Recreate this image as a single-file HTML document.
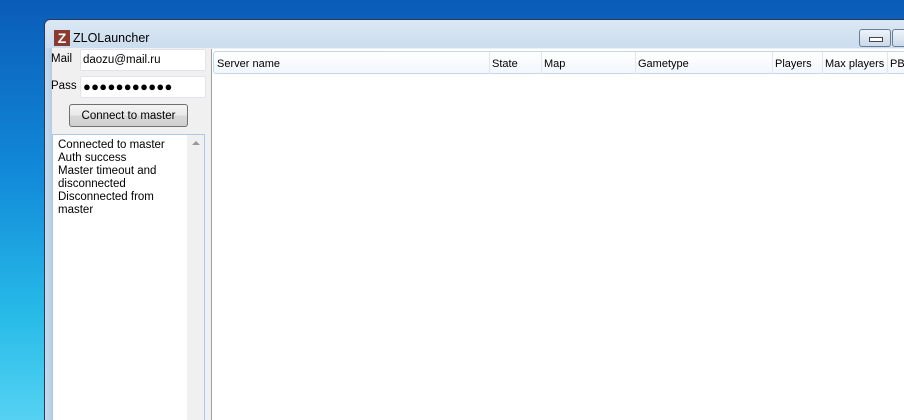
<!DOCTYPE html>
<html style="overflow:hidden;height:420px"><head><style>
html,body{margin:0;}
body{width:904px;height:420px;overflow:hidden;position:relative;font-family:"Liberation Sans",sans-serif;font-size:12px;
background:linear-gradient(180deg,#0a5cb8 0%,#1188d8 40%,#27bbe8 75%,#55d2f2 100%);}
.win{position:absolute;left:44px;top:19px;width:880px;height:401px;border:1px solid #2a3a55;border-bottom:none;border-radius:6px 6px 0 0;box-sizing:border-box;
background:linear-gradient(180deg,#dce8f4 0%,#c4d8ec 10%,#b4cce4 100%);overflow:hidden}
.title{position:absolute;left:28px;top:11px;font-size:12.5px;color:#000}
.logo{position:absolute;left:9px;top:10px;width:16px;height:16px;background:#8a3a2e;color:#fff;font-weight:bold;font-size:14px;line-height:16px;text-align:center}
.client{position:absolute;left:7px;top:28px;right:0;bottom:0;background:#f0f0f0}
.lbl{position:absolute;font-size:11.5px}
.inp{position:absolute;background:#fff;border:1px solid #e2e3ea;border-radius:2px;font-size:11.5px}
.btn{position:absolute;left:69px;top:104px;width:119px;height:23px;border:1px solid #707070;border-radius:3px;background:linear-gradient(#f4f4f4 0%,#e9e9e9 50%,#d8d8d8 51%,#cfcfcf 100%);text-align:center;line-height:23px;box-sizing:border-box;font-size:11.5px}
.log{position:absolute;left:52px;top:134px;width:153px;height:286px;background:#fff;border:1px solid #aac8e4;border-bottom:none;box-sizing:border-box;font-size:11.5px}
.log .t{position:absolute;left:5px;top:4px;line-height:13px}
.sb{position:absolute;right:0;top:0;width:17px;bottom:0;background:#f0f0f0}
.list{position:absolute;left:211px;top:49px;width:693px;height:371px;background:#fff;border-left:1px solid #a0a0a0;overflow:hidden}
.hdr{position:absolute;left:1px;top:2px;width:720px;height:23px;border:1px solid #c0d8f0;border-radius:3px;background:linear-gradient(#fff,#f2f7fc);box-sizing:border-box}
.c{position:absolute;top:6px;font-size:11px}
.d{position:absolute;top:0;width:1px;height:22px;background:#dde8f3}
.wb{position:absolute;top:29px;width:30px;height:16px;border:1px solid #6a7d96;border-radius:3px;background:linear-gradient(#eef3f9,#cbd9e9)}
</style></head><body>
<div class="win">
<div class="logo">Z</div><div class="title">ZLOLauncher</div>
<div class="client"></div>
</div>
<div class="wb" style="left:859px;"><div style="position:absolute;left:9px;top:7px;width:12px;height:3px;border:1px solid #445;background:#fff"></div></div>
<div class="wb" style="left:892px;"></div>
<div style="position:absolute;left:45px;top:48px;width:7px;height:372px;background:linear-gradient(90deg,#c8dcee,#b4cce4)"></div>
<div class="lbl" style="left:51px;top:53px">Mail</div>
<div class="inp" style="left:80px;top:49px;width:124px;height:20px"><span style="position:absolute;left:2px;top:4px">daozu@mail.ru</span></div>
<div class="lbl" style="left:51px;top:80px">Pass</div>
<div class="inp" style="left:80px;top:76px;width:124px;height:20px"><span style="position:absolute;left:2px;top:2px;font-size:13px;letter-spacing:0.3px">●●●●●●●●●●●</span></div>
<div class="btn">Connect to master</div>
<div class="log"><div class="t">Connected to master<br>Auth success<br>Master timeout and<br>disconnected<br>Disconnected from<br>master</div>
<div class="sb"><div style="position:absolute;left:5px;top:6px;width:0;height:0;border-left:4px solid transparent;border-right:4px solid transparent;border-bottom:4px solid #999"></div></div></div>
<div class="list"><div class="hdr">
<span class="c" style="left:3px">Server name</span><div class="d" style="left:275px"></div>
<span class="c" style="left:278px">State</span><div class="d" style="left:327px"></div>
<span class="c" style="left:330px">Map</span><div class="d" style="left:421px"></div>
<span class="c" style="left:424px">Gametype</span><div class="d" style="left:558px"></div>
<span class="c" style="left:561px">Players</span><div class="d" style="left:608px"></div>
<span class="c" style="left:611px">Max players</span><div class="d" style="left:673px"></div>
<span class="c" style="left:676px">PB</span>
</div></div>
</body></html>
